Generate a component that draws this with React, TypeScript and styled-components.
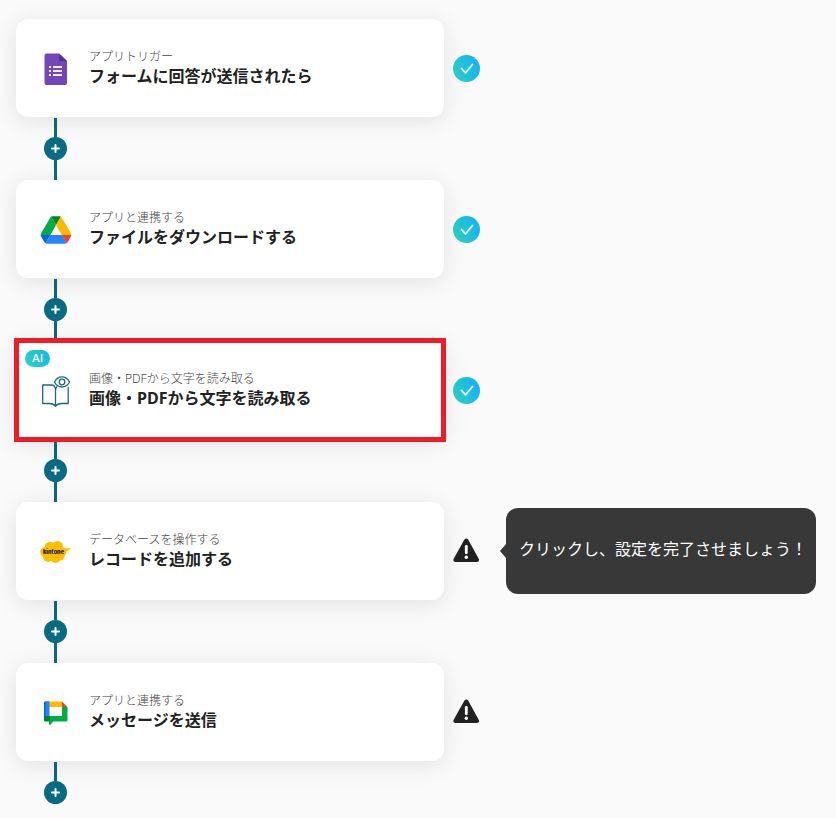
import React from "react";
import styled, { createGlobalStyle } from "styled-components";

const GlobalStyle = createGlobalStyle`
  * { box-sizing: border-box; }
  body {
    margin: 0;
    background: #fafafa;
    color: #222;
    font-family: "Noto Sans", "Noto Sans CJK JP", sans-serif;
  }
  button { font: inherit; color: inherit; }
`;

const Flow = styled.main`
  padding: 19px 20px 14px 16px;
`;

const StepRow = styled.div`
  display: flex;
  align-items: center;
`;

const StepCard = styled.button<{ $highlighted: boolean }>`
  position: relative;
  flex: 0 1 428px;
  min-height: 98px;
  display: flex;
  align-items: center;
  gap: 17px;
  padding: 2px 24px 0;
  border: 0;
  border-radius: ${(p) => (p.$highlighted ? "0" : "12px")};
  background: #fff;
  box-shadow: 0 4px 24px rgba(0, 0, 0, 0.1);
  text-align: left;
  cursor: pointer;

  &::after {
    content: "";
    display: ${(p) => (p.$highlighted ? "block" : "none")};
    position: absolute;
    inset: -3px -2px;
    border: 5px solid #ee1c25;
    pointer-events: none;
  }
`;

const IconSlot = styled.span`
  flex: none;
  width: 32px;
  height: 36px;
  display: flex;
  svg { display: block; }
`;

const StepText = styled.span`
  display: block;
  padding-bottom: 6px;
`;

const Category = styled.span`
  display: block;
  font-size: 12px;
  line-height: 20px;
  font-weight: 300;
  color: #444;
`;

const Title = styled.span`
  display: block;
  font-size: 16px;
  line-height: 18px;
  font-weight: 700;
`;

const AiBadge = styled.span`
  position: absolute;
  top: 9px;
  left: 9px;
  width: 25px;
  height: 17px;
  border-radius: 9px;
  background: linear-gradient(60deg, #2bd4bd, #17b6ee);
  color: #fff;
  font-family: Inter, sans-serif;
  font-size: 11px;
  line-height: 17px;
  font-weight: 500;
  text-align: center;
`;

const Status = styled.span`
  flex: none;
  width: 27px;
  height: 27px;
  margin-left: 9px;
  svg { display: block; }
`;

const Tooltip = styled.div`
  position: relative;
  flex: 0 1 310px;
  min-height: 86px;
  margin-left: 26px;
  padding: 0 0 4px 13px;
  display: flex;
  align-items: center;
  border-radius: 12px;
  background: #383838;
  color: #fff;
  font-size: 16px;
  line-height: 24px;
  white-space: nowrap;

  &::before {
    content: "";
    position: absolute;
    left: -6px;
    top: 50%;
    margin-top: -7px;
    border: solid transparent;
    border-width: 7px 6px 7px 0;
    border-right-color: #383838;
  }
`;

const Connector = styled.div<{ $last: boolean }>`
  width: 23px;
  height: ${(p) => (p.$last ? "43px" : "63px")};
  margin-left: 28px;
  padding-top: 1px;
  display: flex;
  flex-direction: column;
  align-items: center;
`;

const Line = styled.span`
  flex: 0 0 19px;
  width: 3px;
  background: #086a83;

  &:last-child { flex: 1; }
`;

const AddButton = styled.button`
  flex: none;
  width: 23px;
  height: 23px;
  padding: 0;
  border: 0;
  border-radius: 50%;
  display: flex;
  align-items: center;
  justify-content: center;
  background: #086a83;
  cursor: pointer;
`;

const FormsIcon = () => (
  <svg width="32" height="36" viewBox="0 0 32 36">
    <path d="M6 2.500h13l8 7.500v22a2 2 0 0 1-2 2H6.500a2 2 0 0 1-2-2V4.500a2 2 0 0 1 2-2z" fill="#7248b9" />
    <path d="M19 2.500 27 10h-6.500a1.500 1.500 0 0 1-1.500-1.500z" fill="#52308e" />
    <path d="M9 15h2v2H9zM13 15h9v2h-9zM9 19h2v2H9zM13 19h9v2h-9zM9 23h2v2H9zM13 23h9v2h-9z" fill="#f1edf9" />
  </svg>
);

const DriveIcon = () => (
  <svg width="32" height="36" viewBox="-2 -8 91.3 94">
    <path d="m6.600 66.850 3.850 6.650c.8 1.400 1.950 2.500 3.300 3.300l13.750-23.800h-27.500c0 1.550.4 3.100 1.200 4.500z" fill="#0066da" />
    <path d="m43.650 25-13.750-23.800c-1.350.8-2.500 1.900-3.300 3.300l-25.400 44a9.060 9.060 0 0 0-1.200 4.500h27.500z" fill="#00ac47" />
    <path d="m73.550 76.800c1.350-.8 2.500-1.900 3.300-3.300l1.600-2.750 7.650-13.250c.8-1.400 1.200-2.950 1.200-4.500h-27.502l5.852 11.500z" fill="#ea4335" />
    <path d="m43.650 25 13.750-23.800c-1.350-.8-2.900-1.200-4.500-1.200h-18.500c-1.600 0-3.150.45-4.500 1.200z" fill="#00832d" />
    <path d="m59.800 53h-32.300l-13.750 23.800c1.350.8 2.900 1.200 4.500 1.200h50.800c1.600 0 3.150-.45 4.500-1.200z" fill="#2684fc" />
    <path d="m73.400 26.500-12.700-22c-.8-1.400-1.950-2.500-3.300-3.300l-13.750 23.800 16.150 28h27.450c0-1.550-.4-3.100-1.200-4.500z" fill="#ffba00" />
  </svg>
);

const BookEyeIcon = () => (
  <svg width="32" height="36" viewBox="0 0 32 36" fill="none" stroke="#1c6a7d" strokeWidth="1.300" strokeLinejoin="round" strokeLinecap="round">
    <path d="M14.500 9c1.800-3.500 4.200-5.100 7.500-5.100s5.700 1.600 7.500 5.100c-1.800 3.500-4.200 5-7.500 5s-5.700-1.500-7.500-5z" />
    <circle cx="22" cy="9" r="2.800" />
    <path d="M11 12H2.700v18.500h7c2.800 0 4.500.8 5.800 2.800 1.300-2 3-2.800 5.800-2.800h6.900V14.500M15.500 33V17c0-3-1.500-5-4.500-5M15.500 17c.2-1.200.6-2.300 1.300-3.200" />
  </svg>
);

const KintoneIcon = () => (
  <svg width="32" height="36" viewBox="0 0 32 36">
    <g fill="#ffbf00">
      <circle cx="5.500" cy="18" r="5.300" />
      <circle cx="10" cy="13" r="5.300" />
      <circle cx="17.500" cy="12.500" r="5.500" />
      <circle cx="21" cy="18" r="5.300" />
      <circle cx="8" cy="23" r="5" />
      <circle cx="15.500" cy="24" r="5" />
      <circle cx="20" cy="22" r="4.500" />
      <path d="M20 13c4 1.500 7 1.500 11 1.200-1.500 2.200-4 3-8 4.300z" />
    </g>
    <text x="3" y="19.500" fontFamily="Inter, sans-serif" fontSize="5.500" fontWeight="900" fill="#222">kintone</text>
  </svg>
);

const ChatIcon = () => (
  <svg width="32" height="36" viewBox="0 0 32 36">
    <path d="M9 6.500h13V12H9z" fill="#ffba00" />
    <path d="M5 6.500h4v15H4V7.500a1 1 0 0 1 1-1z" fill="#0066da" />
    <path d="M5.500 6.500h4v15h-4z" fill="#2684fc" />
    <path d="M22 6.500 27.500 12H22z" fill="#ea4335" />
    <path d="M22 12h5.500v13a1.500 1.500 0 0 1-1.500 1.500H13L10 30V21h12z" fill="#00ac47" />
    <path d="M4 21h6v5.500H5.500A1.500 1.500 0 0 1 4 25z" fill="#00832d" />
    <path d="M9 26h4.500L10 30c-.6 0-1-.4-1-1z" fill="#00ac47" />
  </svg>
);

const DoneIcon = () => (
  <svg width="27" height="27" viewBox="0 0 27 27" role="img" aria-label="完了">
    <defs>
      <linearGradient id="done" x1="0" y1="0.700" x2="1" y2="0.300">
        <stop offset="0" stopColor="#2bd4bd" />
        <stop offset="0.800" stopColor="#17b6ee" />
      </linearGradient>
    </defs>
    <circle cx="13.500" cy="13.500" r="13.500" fill="url(#done)" />
    <path d="m8.500 13.500 4 4.300 7-8.300" fill="none" stroke="#fff" strokeWidth="1.800" strokeLinecap="round" strokeLinejoin="round" />
  </svg>
);

const WarningIcon = () => (
  <svg width="27" height="27" viewBox="0 2 27 27" role="img" aria-label="未設定">
    <path d="M11.300 3.800c1-1.700 3-1.700 4 0l10.400 19c.9 1.600 0 3.200-1.800 3.200H2.400C.6 26-.2 24.400.7 22.800z" fill="#222" />
    <path d="M13.300 10.300v6.500" stroke="#fff" strokeWidth="2.800" strokeLinecap="round" />
    <circle cx="13.300" cy="21.300" r="1.700" fill="#fff" />
  </svg>
);

interface Step {
  category: string;
  title: string;
  icon: React.ReactNode;
  done: boolean;
  ai?: boolean;
  hint?: string;
}

const steps: Step[] = [
  { category: "アプリトリガー", title: "フォームに回答が送信されたら", icon: <FormsIcon />, done: true },
  { category: "アプリと連携する", title: "ファイルをダウンロードする", icon: <DriveIcon />, done: true },
  { category: "画像・PDFから文字を読み取る", title: "画像・PDFから文字を読み取る", icon: <BookEyeIcon />, done: true, ai: true },
  { category: "データベースを操作する", title: "レコードを追加する", icon: <KintoneIcon />, done: false, hint: "クリックし、設定を完了させましょう！" },
  { category: "アプリと連携する", title: "メッセージを送信", icon: <ChatIcon />, done: false },
];

export default function App() {
  return (
    <>
      <GlobalStyle />
      <Flow lang="ja">
        {steps.map((step, i) => {
          const last = i === steps.length - 1;
          return (
            <React.Fragment key={i}>
              <StepRow>
                <StepCard type="button" $highlighted={!!step.ai}>
                  {step.ai && <AiBadge>AI</AiBadge>}
                  <IconSlot>{step.icon}</IconSlot>
                  <StepText>
                    <Category>{step.category}</Category>
                    <Title>{step.title}</Title>
                  </StepText>
                </StepCard>
                <Status>{step.done ? <DoneIcon /> : <WarningIcon />}</Status>
                {step.hint && <Tooltip role="tooltip">{step.hint}</Tooltip>}
              </StepRow>
              <Connector $last={last}>
                <Line />
                <AddButton type="button" aria-label="ステップを追加">
                  <svg width="9" height="9" viewBox="0 0 9 9" stroke="#fff" strokeWidth="2" strokeLinecap="round">
                    <path d="M4.500 1v7M1 4.500h7" />
                  </svg>
                </AddButton>
                {!last && <Line />}
              </Connector>
            </React.Fragment>
          );
        })}
      </Flow>
    </>
  );
}
